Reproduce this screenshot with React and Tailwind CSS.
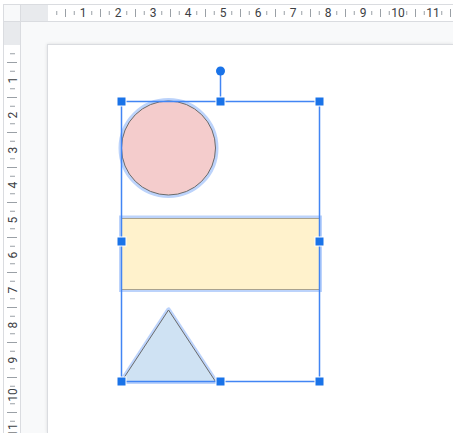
import React from 'react'

const UNIT = 35
const X0 = 48
const Y0 = 45
const BLUE = '#1a73e8'
const LINE = '#4285f4'

/* ── Top ruler ───────────────────────────────────────── */
function TopRuler() {
  const units = Array.from({ length: 12 }, (_, i) => i)
  return (
    <svg width="432" height="16" viewBox="21 5 432 16" className="block">
      <rect x="21" y="5" width="27" height="16" fill="#e8eaed" />
      <rect x="48" y="5" width="405" height="16" fill="#ffffff" />
      {units.map(i => {
        const x = X0 + UNIT * i
        return (
          <g key={i}>
            <line x1={x + 8.75} x2={x + 8.75} y1="11" y2="15" stroke="#9aa0a6" strokeWidth="1" />
            <line x1={x + 17.5} x2={x + 17.5} y1="9" y2="17" stroke="#9aa0a6" strokeWidth="1" />
            <line x1={x + 26.25} x2={x + 26.25} y1="11" y2="15" stroke="#9aa0a6" strokeWidth="1" />
            {i > 0 && (
              <text
                x={x}
                y="17"
                textAnchor="middle"
                fontSize="12"
                fontFamily="Roboto, 'Liberation Sans', sans-serif"
                fill="#3c4043"
              >
                {i}
              </text>
            )}
          </g>
        )
      })}
    </svg>
  )
}

/* ── Left ruler ──────────────────────────────────────── */
function LeftRuler() {
  const units = Array.from({ length: 12 }, (_, i) => i)
  return (
    <svg width="16" height="411" viewBox="4 22 16 411" className="block">
      <rect x="4" y="22" width="16" height="23" fill="#e8eaed" />
      <rect x="4" y="45" width="16" height="388" fill="#ffffff" />
      {units.map(i => {
        const y = Y0 + UNIT * i
        return (
          <g key={i}>
            <line y1={y + 8.75} y2={y + 8.75} x1="10" x2="15" stroke="#9aa0a6" strokeWidth="1" />
            <line y1={y + 17.5} y2={y + 17.5} x1="7" x2="17" stroke="#9aa0a6" strokeWidth="1" />
            <line y1={y + 26.25} y2={y + 26.25} x1="10" x2="15" stroke="#9aa0a6" strokeWidth="1" />
            {i > 0 && (
              <text
                x="0"
                y="0"
                transform={`translate(16.5 ${y}) rotate(-90)`}
                textAnchor="middle"
                fontSize="12"
                fontFamily="Roboto, 'Liberation Sans', sans-serif"
                fill="#3c4043"
              >
                {i}
              </text>
            )}
          </g>
        )
      })}
    </svg>
  )
}

/* ── Handles ─────────────────────────────────────────── */
function Handle({ x, y }) {
  return <rect x={x - 4.5} y={y - 4.5} width="9" height="9" fill={BLUE} stroke="#ffffff" strokeWidth="1" />
}

/* ── Page drawing ────────────────────────────────────── */
function Drawing() {
  const handles = [
    [121.5, 101.5], [220.5, 101.5], [319.5, 101.5],
    [121.5, 241.5], [319.5, 241.5],
    [121.5, 381.5], [220.5, 381.5], [319.5, 381.5],
  ]
  const tri = '168.5,310 121.5,381.5 215.5,381.5'
  return (
    <svg width="405" height="388" viewBox="48 45 405 388" className="block">
      {/* circle */}
      <circle cx="168.5" cy="148" r="47.5" fill="none" stroke="#bcd3fb" strokeWidth="5" />
      <circle cx="168.5" cy="148" r="47" fill="#f4cccc" stroke="#6b6b6b" strokeWidth="1" />

      {/* rectangle */}
      <rect x="121.5" y="218" width="198" height="71.5" fill="none" stroke="#bcd3fb" strokeWidth="5" />
      <rect x="121.5" y="218.5" width="198" height="71" fill="#fff2cc" stroke="#a8a290" strokeWidth="1" />

      {/* triangle */}
      <polygon points={tri} fill="none" stroke="#bcd3fb" strokeWidth="5" strokeLinejoin="round" />
      <polygon points={tri} fill="#cfe2f3" stroke="#6b6b6b" strokeWidth="1" strokeLinejoin="round" />

      {/* selection frame */}
      <g stroke={LINE} strokeWidth="1.5" fill="none">
        <line x1="121.5" x2="121.5" y1="101.5" y2="381.5" />
        <line x1="319.5" x2="319.5" y1="101.5" y2="381.5" />
        <line x1="121.5" x2="319.5" y1="101.5" y2="101.5" />
        <line x1="121.5" x2="319.5" y1="381.5" y2="381.5" />
        <line x1="220.5" x2="220.5" y1="71" y2="101.5" />
      </g>
      <circle cx="220.5" cy="71" r="4.5" fill={BLUE} />
      {handles.map(([x, y]) => (
        <Handle key={`${x}-${y}`} x={x} y={y} />
      ))}
    </svg>
  )
}

export default function App() {
  return (
    <div className="w-[453px] h-[433px] bg-white pl-[3px] pt-[4px] overflow-hidden">
      <div className="flex flex-col w-full h-full border-l border-t border-[#dadce0]">
        {/* ruler row */}
        <div className="flex shrink-0">
          <div className="w-[17px] h-[17px] bg-[#f8f9fa] border-r border-b border-[#dadce0]" />
          <div className="flex-1 h-[17px] border-b border-[#dadce0] overflow-hidden">
            <TopRuler />
          </div>
        </div>

        {/* body row */}
        <div className="flex flex-1 min-h-0">
          <div className="w-[17px] shrink-0 border-r border-[#dadce0] overflow-hidden">
            <LeftRuler />
          </div>
          <div className="flex-1 flex flex-col bg-[#f8f9fa] pl-[26px] pt-[22px] overflow-hidden">
            <div className="flex-1 bg-white border-l border-t border-[#dadce0] shadow-[0_0_3px_rgba(60,64,67,0.15)] overflow-hidden">
              <Drawing />
            </div>
          </div>
        </div>
      </div>
    </div>
  )
}
